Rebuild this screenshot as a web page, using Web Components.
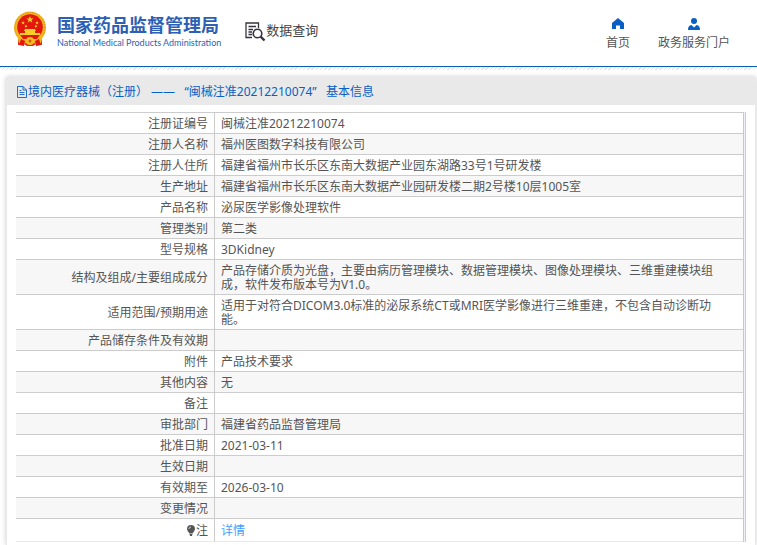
<!DOCTYPE html>
<html lang="zh-CN">
<head>
<meta charset="utf-8">
<title>国家药品监督管理局 数据查询</title>
<style>
body{margin:0;min-height:100vh;display:flex;flex-direction:column;background:#fff;color:#555;font:12px/14px "Noto Sans","Noto Sans CJK SC",sans-serif}
info-panel{flex:1}
</style>
</head>
<body>
<site-header>
  <nav-item slot="nav" href="#home"><svg slot="icon" width="12" height="12" viewBox="0 0 12 12"><path fill="#0a5fc4" d="M6 0 0 5v6h4V7.500h4V11h4V5z"/></svg>首页</nav-item>
  <nav-item slot="nav" href="#portal"><svg slot="icon" width="12" height="12" viewBox="0 0 12 12"><circle cx="6" cy="3" r="3" fill="#0a5fc4"/><path fill="#0a5fc4" d="M0 12c0-3 1-4.500 3.500-5L6 9.500 8.500 7C11 7.500 12 9 12 12z"/></svg>政务服务门户</nav-item>
</site-header>
<info-panel>
  <span slot="title">境内医疗器械（注册） ——&nbsp;&nbsp; “闽械注准20212210074”&nbsp;&nbsp; 基本信息</span>
  <record-table></record-table>
</info-panel>

<template id="t-header">
<style>
:host{display:block;background:repeating-linear-gradient(135deg,#e6e6e6 0 1px,#fff 1px 3px) bottom/100% 3px no-repeat;padding-bottom:3px}
header{display:flex;align-items:flex-start;height:66px;background:#fff;border-bottom:1px solid #0a5fc4;padding:0 27px 0 13px;box-sizing:content-box}
.brand{display:flex;gap:10px;padding-top:11px;color:#2d5fb5}
.names{padding-top:3px;white-space:nowrap}
.cn{font:700 18px/20px "Noto Sans CJK SC",sans-serif}
.en{font:400 9px/14px Lato,sans-serif;padding-top:2px}
.search{display:flex;margin:22px 0 0 24px;color:#444;font:400 13px/16px "Noto Sans CJK SC",sans-serif;white-space:nowrap}
nav{margin-left:auto;display:flex;gap:28px;padding-top:18px}
</style>
<header>
 <div class="brand">
  <svg width="34" height="36" viewBox="0 0 34 36" role="img" aria-label="国徽">
   <path fill="#e9251b" d="M5 25 5 34l6-1 3 2h6l3-2 6 1 0-9z"/>
   <circle cx="17" cy="16.500" r="16" fill="#f2b51d"/>
   <circle cx="17" cy="16.500" r="15" fill="none" stroke="#d98b16" stroke-dasharray="1 1.500"/>
   <circle cx="17" cy="16" r="12.800" fill="#e3170e"/>
   <path fill="#f9cf25" d="m17 5 1 2.500h2.700l-2.200 1.600.9 2.600-2.400-1.600-2.400 1.600.9-2.600-2.200-1.600H16zM10 10l.6 1.200h1.300l-1 .9.4 1.300-1.300-.8-1.200.8.4-1.300-1-.9h1.300zM24 10l.6 1.200h1.300l-1 .9.4 1.300-1.300-.8-1.200.8.4-1.300-1-.9h1.300zM12 14l1 .5.900-.5-.2 1.200.6.800h-1l-.4 1-.4-1h-1l.7-.8zM22 14l1 .5.900-.5-.2 1.200.6.800h-1l-.4 1-.4-1h-1l.7-.8z"/>
   <path fill="#f9cf25" d="M12 18h10l1 2h-1v2h5v2H7v-2h5v-2h-1z"/>
   <path fill="#f2b51d" d="M4 24c4 4 8 4 10 5l-2 4-6-1zM30 24c-4 4-8 4-10 5l2 4 6-1z"/>
   <path fill="#e3170e" d="M8 25c5 2 13 2 18 0l-2 3H10z"/>
   <circle cx="17" cy="30" r="4" fill="#f4be20"/><circle cx="17" cy="30" r="1.500" fill="#d75a13"/>
   <path fill="#e3170e" d="m8 28 4 2-1 5-5-1zM26 28l-4 2 1 5 5-1z"/>
  </svg>
  <div class="names"><div class="cn">国家药品监督管理局</div><div class="en">National Medical Products Administration</div></div>
 </div>
 <div class="search"><svg width="21" height="20" viewBox="0 0 21 20" fill="none" stroke="#34343e" aria-hidden="true"><path stroke-width="1.300" d="M13.500 6V1H1v14.500h6M3.500 4.500H11M3.500 7.500H8M3.500 10H7M3.500 12.500H7"/><circle cx="12.500" cy="11.500" r="4.300" stroke-width="1.600"/><path stroke-width="2.400" d="m15.500 14.500 4 4"/></svg><span>数据查询</span></div>
 <nav><slot name="nav"></slot></nav>
</header>
</template>

<template id="t-nav">
<style>
:host{display:block}
a{display:flex;flex-direction:column;align-items:center;gap:5px;color:#555;text-decoration:none;line-height:16px;white-space:nowrap}
</style>
<a><slot name="icon"></slot><span><slot></slot></span></a>
</template>

<template id="t-panel">
<style>
:host{display:block;margin:7px 1px 0 6px;background:#fff;box-shadow:0 0 5px #ccc;border-left:1px solid #e9e9e9;border-right:1px solid #e9e9e9;box-sizing:border-box}
h1{display:flex;align-items:center;margin:0;padding:1px 10px 0;height:27px;background:#e9e9e9;color:#0a5fc4;font-size:12px;font-weight:400;gap:1px}
div{padding:7px 9px 0}
</style>
<h1><svg width="10" height="12" viewBox="0 0 10 12" fill="none" stroke="#0a5fc4" stroke-width=".9" aria-hidden="true"><path d="M.5.5h5.500l3.500 3.500v7.500h-9zM6 .5V4h3.500M2.500 4.500h2M2.500 6.500h5M2.500 8.500h5"/></svg><slot name="title"></slot></h1>
<div><slot></slot></div>
</template>

<template id="t-table">
<style>
:host{display:block;border-right:1px solid #c9c9cf;padding-right:1px;background:#f0f0fa}
table{width:100%;border-collapse:separate;border-spacing:0;table-layout:fixed;border-top:1px solid #ccc;border-right:1px solid #c8c8cc;background:#fff}
col:first-child{width:199px}
th,td{height:14px;padding:4px 6px 2px;border-bottom:1px solid #ccc;font-weight:400;line-height:14px}
th{text-align:right;border-right:1px solid #ccc}
td{text-align:left;padding-right:20px}
tr:nth-child(even){background:#f7f7f7}
tr:last-child>*{height:16px;border-bottom-color:#e9e9e9}
a{color:#409eff;text-decoration:none}
svg{vertical-align:-1px}
</style>
<table><colgroup><col><col></colgroup><tbody>
<tr><th scope="row">注册证编号</th><td>闽械注准20212210074</td></tr>
<tr><th scope="row">注册人名称</th><td>福州医图数字科技有限公司</td></tr>
<tr><th scope="row">注册人住所</th><td>福建省福州市长乐区东南大数据产业园东湖路33号1号研发楼</td></tr>
<tr><th scope="row">生产地址</th><td>福建省福州市长乐区东南大数据产业园研发楼二期2号楼10层1005室</td></tr>
<tr><th scope="row">产品名称</th><td>泌尿医学影像处理软件</td></tr>
<tr><th scope="row">管理类别</th><td>第二类</td></tr>
<tr><th scope="row">型号规格</th><td>3DKidney</td></tr>
<tr><th scope="row">结构及组成/主要组成成分</th><td>产品存储介质为光盘，主要由病历管理模块、数据管理模块、图像处理模块、三维重建模块组成，软件发布版本号为V1.0。</td></tr>
<tr><th scope="row">适用范围/预期用途</th><td>适用于对符合DICOM3.0标准的泌尿系统CT或MRI医学影像进行三维重建，不包含自动诊断功能。</td></tr>
<tr><th scope="row">产品储存条件及有效期</th><td></td></tr>
<tr><th scope="row">附件</th><td>产品技术要求</td></tr>
<tr><th scope="row">其他内容</th><td>无</td></tr>
<tr><th scope="row">备注</th><td></td></tr>
<tr><th scope="row">审批部门</th><td>福建省药品监督管理局</td></tr>
<tr><th scope="row">批准日期</th><td>2021-03-11</td></tr>
<tr><th scope="row">生效日期</th><td></td></tr>
<tr><th scope="row">有效期至</th><td>2026-03-10</td></tr>
<tr><th scope="row">变更情况</th><td></td></tr>
<tr><th scope="row"><svg width="10" height="11" viewBox="0 0 10 11" aria-hidden="true"><path fill="#555" d="M5 0a4 4 0 0 1 4 4c0 2-2 3-2.300 4.500H3.300C3 7 1 6 1 4a4 4 0 0 1 4-4zM3.500 9h3l-.5 2H4z"/><path d="M3 4c0-1.200.8-2 2-2" fill="none" stroke="#fff" stroke-width=".8"/></svg>注</th><td><a href="#detail">详情</a></td></tr>
</tbody></table>
</template>

<script>
class TemplateElement extends HTMLElement {
  constructor() {
    super();
    this.attachShadow({mode: "open"}).append(document.getElementById(this.constructor.template).content.cloneNode(true));
  }
}
customElements.define("site-header", class extends TemplateElement { static template = "t-header"; });
customElements.define("nav-item", class extends TemplateElement {
  static template = "t-nav";
  connectedCallback() { this.shadowRoot.querySelector("a").href = this.getAttribute("href"); }
});
customElements.define("info-panel", class extends TemplateElement { static template = "t-panel"; });
customElements.define("record-table", class extends TemplateElement { static template = "t-table"; });
</script>
</body>
</html>
